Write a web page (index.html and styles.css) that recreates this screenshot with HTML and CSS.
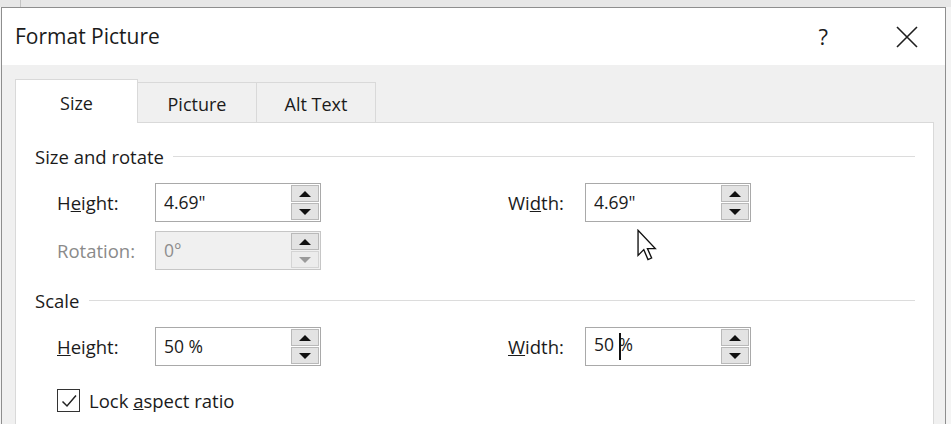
FILE: index.html
```html
<!DOCTYPE html>
<html>
<head>
<meta charset="utf-8">
<link rel="stylesheet" href="styles.css">
</head>
<body>
<div class="backdrop">
  <div class="backdrop-cell"></div>
</div>
<div class="dialog">
  <div class="titlebar">
    <span class="title">Format Picture</span>
    <span class="help">?</span>
    <svg class="close" width="22" height="22" viewBox="0 0 22 22"><path d="M1 1 L21 21 M21 1 L1 21" stroke="#1e1e1e" stroke-width="1.6" fill="none"/></svg>
  </div>
  <div class="tabs">
    <div class="tab active">Size</div>
    <div class="tab">Picture</div>
    <div class="tab">Alt Text</div>
  </div>
  <div class="panel">
    <div class="legend"><span>Size and rotate</span><div class="rule"></div></div>
    <div class="grid">
      <label class="lbl">H<u>e</u>ight:</label>
      <div class="spin"><span class="val">4.69"</span><div class="btns"><div class="btn"><i class="up"></i></div><div class="btn"><i class="down"></i></div></div></div>
      <div></div>
      <label class="lbl">Wi<u>d</u>th:</label>
      <div class="spin"><span class="val">4.69"</span><div class="btns"><div class="btn"><i class="up"></i></div><div class="btn"><i class="down"></i></div></div></div>

      <label class="lbl dis">Rotation:</label>
      <div class="spin disabled"><span class="val">0°</span><div class="btns"><div class="btn"><i class="up"></i></div><div class="btn"><i class="down"></i></div></div></div>
    </div>
    <div class="legend scale"><span>Scale</span><div class="rule"></div></div>
    <div class="grid single">
      <label class="lbl"><u>H</u>eight:</label>
      <div class="spin"><span class="val">50 %</span><div class="btns"><div class="btn"><i class="up"></i></div><div class="btn"><i class="down"></i></div></div></div>
      <div></div>
      <label class="lbl"><u>W</u>idth:</label>
      <div class="spin"><span class="val">50&nbsp;<span class="caret"></span>%</span><div class="btns"><div class="btn"><i class="up"></i></div><div class="btn"><i class="down"></i></div></div></div>
    </div>
    <div class="check-row">
      <div class="checkbox"><svg width="20" height="20" viewBox="0 0 20 20"><path d="M3.5 10.5 L8 15 L17 4.5" stroke="#222" stroke-width="1.5" fill="none"/></svg></div>
      <span>Lock <u>a</u>spect ratio</span>
    </div>
  </div>
</div>
<svg class="cursor" width="23" height="35" viewBox="0 0 22 33"><path d="M1 1 L1 25 L6.5 19.5 L10.5 29 L14 27.5 L10 18.5 L17.5 18.5 Z" fill="#fff" stroke="#111" stroke-width="1.3" stroke-linejoin="miter"/></svg>
</body>
</html>
```
FILE: styles.css
```css
* { box-sizing: border-box; }
html, body {
  margin: 0;
  width: 951px;
  height: 424px;
  overflow: hidden;
}
body {
  background: #f4f4f4;
  font-family: "Open Sans", "Noto Sans", sans-serif;
  color: #1b1b1b;
  position: relative;
}
.backdrop {
  height: 7px;
  background: #e7e7e7;
  display: flex;
}
.backdrop-cell {
  width: 21px;
  border-right: 1px solid #c4c4c4;
}
.dialog {
  margin-left: 1px;
  width: 945px;
  height: 417px;
  border: 1px solid #8e8e8e;
  border-bottom: none;
  background: #f0f0f0;
  display: flex;
  flex-direction: column;
}
.titlebar {
  height: 57px;
  background: #fff;
  display: flex;
  align-items: center;
  padding-left: 13px;
  padding-right: 27px;
}
.title {
  font-size: 21px;
  padding-bottom: 2px;
}
.help {
  margin-left: auto;
  font-size: 22px;
  margin-right: 68px;
  padding-bottom: 2px;
}
.close {
  display: block;
}
.tabs {
  display: flex;
  align-items: flex-end;
  padding: 14px 0 0 13px;
  position: relative;
  z-index: 1;
}
.tab {
  width: 119px;
  height: 40px;
  border: 1px solid #d9d9d9;
  border-left: none;
  border-bottom: none;
  background: #f0f0f0;
  font-size: 18px;
  display: flex;
  align-items: center;
  justify-content: center;
  padding-top: 3px;
}
.tab.active {
  width: 123px;
  height: 44px;
  border-left: 1px solid #d9d9d9;
  background: #fff;
  margin-bottom: -1px;
  padding-top: 3px;
  padding-bottom: 0;
}
.panel {
  margin-left: 13px;
  width: 919px;
  flex: 1;
  background: #fff;
  border: 1px solid #d9d9d9;
  border-bottom: none;
  padding: 21px 18px 0 19px;
}
.legend {
  display: flex;
  align-items: center;
  height: 24px;
  font-size: 18.5px;
}
.legend .rule {
  flex: 1;
  height: 1px;
  background: #dcdcdc;
  margin-left: 9px;
}
.legend.scale {
  margin-top: 18px;
}
.legend.scale .rule { margin-left: 10px; }
.grid {
  display: grid;
  grid-template-columns: 98px 166px 187px 77px 166px;
  grid-auto-rows: 39px;
  row-gap: 9px;
  margin-left: 22px;
  margin-top: 15px;
  align-items: center;
}
.lbl {
  font-size: 18.5px;
}
.lbl.dis { color: #8a8a8a; }
.spin {
  height: 39px;
  border: 1px solid #a9a9a9;
  background: #fff;
  display: flex;
  align-items: center;
  padding: 1px 1px 1px 8px;
  font-size: 17.5px;
}
.spin .val {
  flex: 1;
  padding-bottom: 1px;
}
.spin.disabled {
  background: #f0f0f0;
  border-color: #c6c6c6;
  color: #8d8d8d;
}
.btns {
  width: 28px;
  height: 35px;
  display: flex;
  flex-direction: column;
  gap: 1px;
}
.btn {
  flex: 1;
  background: #e3e3e3;
  border: 1px solid #b9b9b9;
  display: flex;
  align-items: center;
  justify-content: center;
}
.btn i {
  width: 0;
  height: 0;
  border-left: 6px solid transparent;
  border-right: 6px solid transparent;
}
.btn i.up { border-bottom: 6px solid #111; }
.btn i.down { border-top: 6px solid #111; }
.spin.disabled .btn:last-child { background: #ececec; border-color: #d4d4d4; }
.spin.disabled .btn i.down { border-top-color: #9a9a9a; }
.caret {
  display: inline-block;
  width: 2px;
  height: 27px;
  background: #111;
  vertical-align: middle;
  margin-right: -2px;
  position: relative;
}
.check-row {
  display: flex;
  align-items: center;
  margin-left: 22px;
  margin-top: 22px;
  font-size: 18.5px;
  gap: 9px;
}
.checkbox {
  width: 23px;
  height: 23px;
  border: 1px solid #333;
  display: flex;
  align-items: center;
  justify-content: center;
  background: #fff;
}
.checkbox svg { display: block; }
.cursor {
  position: absolute;
  left: 637px;
  top: 229px;
}
```
